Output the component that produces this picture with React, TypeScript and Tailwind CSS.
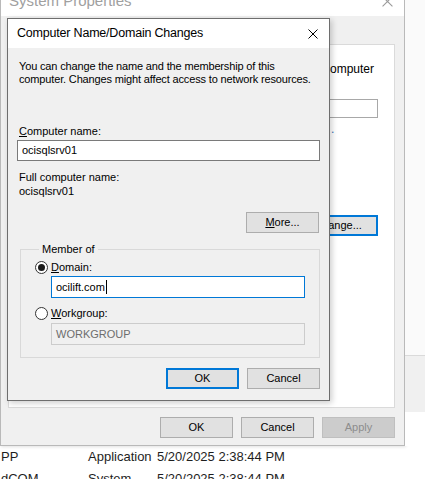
import React from "react";

const font = "font-['Liberation_Sans',Arial,sans-serif]";

const CloseIcon = ({ color = "#000", size = 10 }: { color?: string; size?: number }) => (
  <svg width={size} height={size} viewBox="0 0 10 10">
    <path d="M0.5 0.5 L9.5 9.5 M9.5 0.5 L0.5 9.5" stroke={color} strokeWidth="1" />
  </svg>
);

const Btn = ({
  children,
  primary,
  disabled,
}: {
  children: React.ReactNode;
  primary?: boolean;
  disabled?: boolean;
}) => {
  let cls = "border border-[#adadad] bg-[#e1e1e1] text-black";
  if (primary) cls = "border-2 border-[#0078d7] bg-[#e1e1e1] text-black";
  if (disabled) cls = "border border-[#bfbfbf] bg-[#cccccc] text-[#8d8d8d]";
  return (
    <div className={`h-[21px] w-[73px] flex items-center justify-center text-[11px] ${cls}`}>
      {children}
    </div>
  );
};

const Radio = ({ checked }: { checked?: boolean }) => (
  <div className="w-[13px] h-[13px] rounded-full border border-[#333] bg-white flex items-center justify-center shrink-0">
    {checked && <div className="w-[7px] h-[7px] rounded-full bg-[#1a1a1a]" />}
  </div>
);

const SystemProperties = () => (
  <div className="w-[405px] h-[460px] -mt-[14px] flex flex-col border-r border-b border-l border-[#b9b9b9] shadow-[1px_1px_3px_rgba(0,0,0,0.12)] shrink-0">
    <div className="h-[30px] bg-white flex items-center justify-between pl-[8px] pr-[11px]">
      <span className="text-[15px] text-[#a0a0a0]">System Properties</span>
      <CloseIcon color="#9a9a9a" size={11} />
    </div>
    <div className="flex-1 bg-[#f0f0f0] flex flex-col pt-[28px] pl-[7px] pr-[9px]">
      <div className="h-[364px] bg-white border border-[#dadada] flex flex-col items-end pr-[16px]">
        <div className="mt-[17px] mr-[4px] text-[12px] leading-[14px]">computer</div>
        <div className="mt-[23px] w-[90px] h-[19px] border border-[#a8a8a8] bg-white" />
        <div className="mt-[4px] self-start ml-[322px] text-[12px] leading-[14px] text-[#3d6fb5]">.</div>
        <div className="mt-[79px] w-[80px] h-[21px] border-2 border-[#0078d7] bg-[#e1e1e1] flex items-center justify-center text-[11px]">
          Change...
        </div>
      </div>
      <div className="flex justify-end gap-[8px] mt-[9px]">
        <Btn>OK</Btn>
        <Btn>Cancel</Btn>
        <Btn disabled>Apply</Btn>
      </div>
    </div>
  </div>
);

const Dialog = () => (
  <div className="absolute left-[7px] top-[18px] w-[323px] h-[383px] border border-[#6e6e6e] bg-[#f0f0f0] flex flex-col shadow-[2px_2px_6px_rgba(0,0,0,0.2)]">
    <div className="h-[29px] bg-white flex items-center justify-between pl-[9px] pr-[11px]">
      <span className="text-[12.5px] tracking-[-0.2px] text-black">Computer Name/Domain Changes</span>
      <CloseIcon />
    </div>
    <div className="flex-1 flex flex-col px-[9px] text-[11px] text-black">
      <p className="mt-[12px] ml-[2px] leading-[13px] whitespace-nowrap tracking-[-0.15px]">
        You can change the name and the membership of this
        <br />
        computer. Changes might affect access to network resources.
      </p>
      <div className="mt-[39px] ml-[2px] leading-[13px]">
        <span className="underline">C</span>omputer name:
      </div>
      <div className="mt-[2px] h-[21px] border border-[#7a7a7a] bg-white flex items-center px-[4px]">
        ocisqlsrv01
      </div>
      <div className="mt-[9px] ml-[2px] leading-[14px]">Full computer name:</div>
      <div className="ml-[2px] leading-[14px]">ocisqlsrv01</div>
      <div className="mt-[14px] mr-[1px] flex justify-end">
        <Btn>
          <span>
            <span className="underline">M</span>ore...
          </span>
        </Btn>
      </div>
      <fieldset className="mt-[10px] ml-[3px] border border-[#d9d9d9] h-[115px] pl-[14px] pr-[14px]">
        <legend className="ml-[4px] px-[3px] leading-[13px]">Member of</legend>
        <div className="flex items-center gap-[3px] mt-[5px]">
          <Radio checked />
          <span className="leading-[13px]">
            <span className="underline">D</span>omain:
          </span>
        </div>
        <div className="mt-[2px] ml-[16px] h-[22px] border border-[#0078d7] bg-white flex items-center px-[4px]">
          ocilift.com
          <span className="ml-[1px] w-[1px] h-[14px] bg-black" />
        </div>
        <div className="flex items-center gap-[3px] mt-[9px]">
          <Radio />
          <span className="leading-[13px]">
            <span className="underline">W</span>orkgroup:
          </span>
        </div>
        <div className="mt-[3px] ml-[16px] h-[22px] border border-[#cccccc] bg-[#f0f0f0] flex items-center px-[4px] text-[#6d6d6d]">
          WORKGROUP
        </div>
      </fieldset>
      <div className="mt-[10px] flex justify-end gap-[8px]">
        <Btn primary>OK</Btn>
        <Btn>Cancel</Btn>
      </div>
    </div>
  </div>
);

const rows = [
  { src: "PP", type: "Application", date: "5/20/2025 2:38:44 PM" },
  { src: "dCOM", type: "System", date: "5/20/2025 2:38:44 PM" },
];

export default function App() {
  return (
    <div className={`relative w-[425px] h-[479px] overflow-hidden bg-white ${font}`}>
      <div className="flex h-[446px]">
        <SystemProperties />
        <div className="flex-1 flex flex-col">
          <div className="h-[355px] bg-[#fafafa]" />
          <div className="h-[57px] bg-[#f0f0f0] border-t border-[#dadada]" />
          <div className="flex-1 bg-white" />
        </div>
      </div>
      <div className="flex flex-col text-[13px] text-[#1e1e1e]">
        {rows.map((r, i) => (
          <div key={i} className="h-[22px] flex items-center whitespace-nowrap">
            <span className="w-[88px] pl-[1px]">{r.src}</span>
            <span className="w-[69px]">{r.type}</span>
            <span>{r.date}</span>
          </div>
        ))}
      </div>
      <Dialog />
    </div>
  );
}
